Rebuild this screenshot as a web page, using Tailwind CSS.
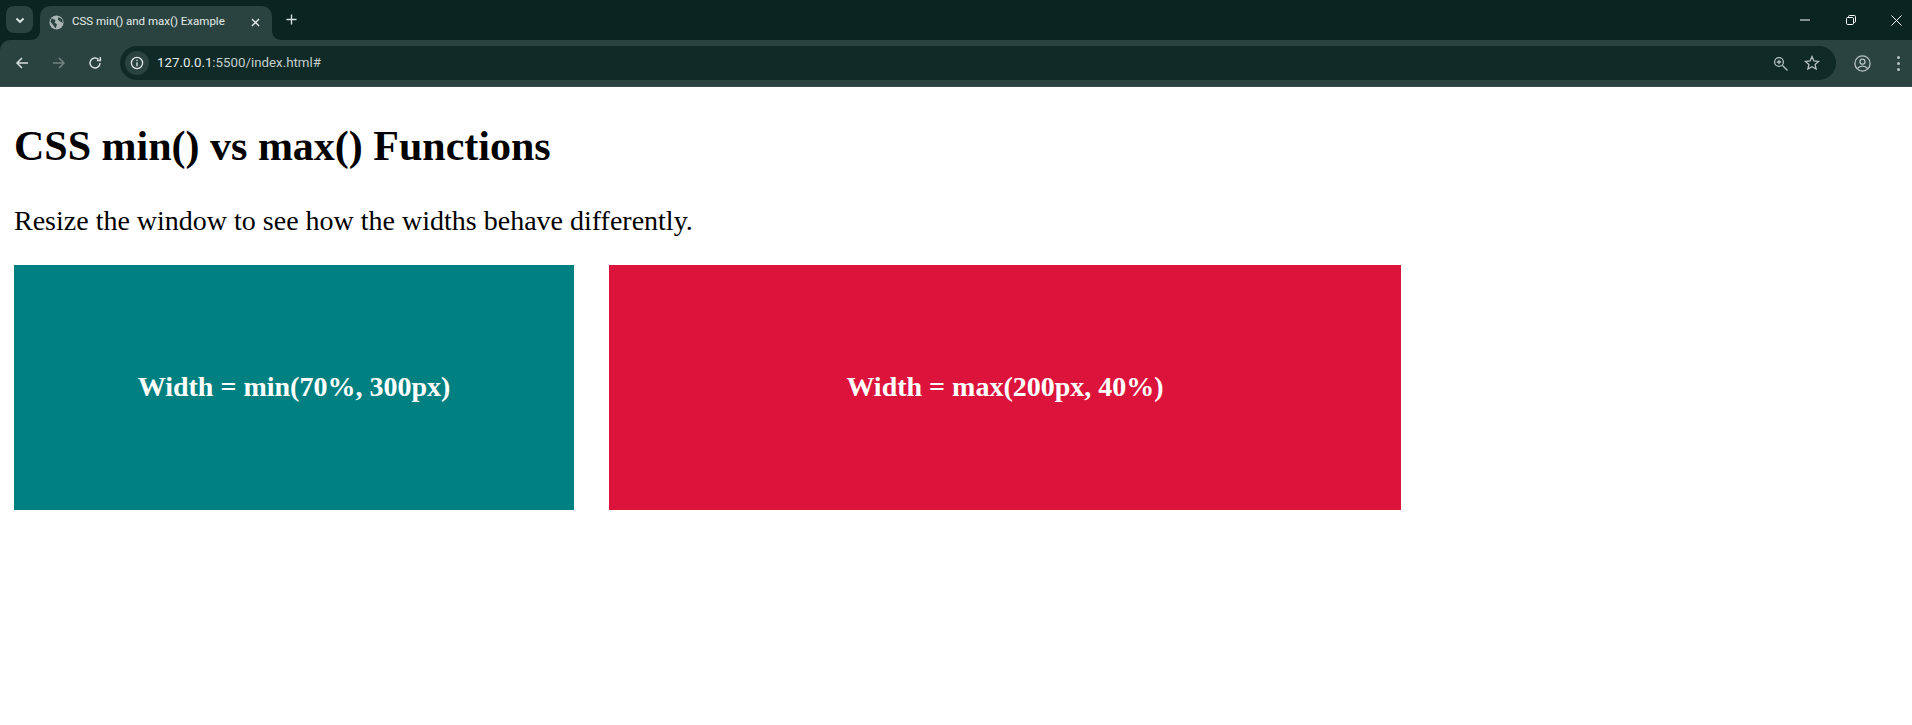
<!DOCTYPE html>
<html lang="en">
<head>
    <meta charset="UTF-8">
    <title>CSS min() and max() Example</title>
    <script src="https://cdn.jsdelivr.net/npm/@tailwindcss/browser@4"></script>
</head>
<body class="bg-white overflow-hidden h-[725px]">
    <!-- Browser chrome -->
    <div class="bg-[#0a2422] font-['Roboto',sans-serif]">
        <div class="h-[40px] flex items-start">
            <div class="ml-[6px] mt-[6px] w-[27px] h-[27px] rounded-lg bg-[#2a4340] flex items-center justify-center">
                <svg class="w-3 h-3" viewBox="0 0 12 12" fill="none" stroke="#e4ecea" stroke-width="1.8"><path d="M2.500 4.500 6 8l3.500-3.500"/></svg>
            </div>
            <div class="relative ml-[7px] mt-[6px] w-[232px] h-[34px] rounded-t-[10px] bg-[#2a4340] flex items-center pl-[9px] pr-[12px] text-[11.500px] text-[#e4ecea]">
                <svg class="absolute -left-[10px] bottom-0 w-[10px] h-[10px]" viewBox="0 0 10 10"><path d="M10 0C10 6 7 10 0 10H10Z" fill="#2a4340"/></svg>
                <svg class="absolute -right-[10px] bottom-0 w-[10px] h-[10px]" viewBox="0 0 10 10"><path d="M0 0C0 6 3 10 10 10H0Z" fill="#2a4340"/></svg>
                <svg class="w-[15px] h-[15px] shrink-0 mb-[2px]" viewBox="0 0 16 16"><circle cx="8" cy="8" r="7.500" fill="#aab6b4"/><path d="M3 3.500 7 5.500 6 8 8.500 10 7 14.500 4 10 1.500 7ZM10 2l4 2.500.8 4L12 7 9.500 5Z" fill="#2a4340"/></svg>
                <span class="ml-[8px] whitespace-nowrap mb-[2px]">CSS min() and max() Example</span>
                <svg class="w-[9px] h-[9px] ml-auto shrink-0 mb-[2px]" viewBox="0 0 10 10" stroke="#e4ecea" stroke-width="1.500"><path d="M1 1l8 8M9 1 1 9"/></svg>
            </div>
            <svg class="w-[11px] h-[11px] ml-[14px] mt-[14px]" viewBox="0 0 12 12" stroke="#d5dedc" stroke-width="1.500"><path d="M6 .5v11M.5 6h11"/></svg>
            <div class="ml-auto flex items-center h-[40px] pr-[10px]">
                <svg class="w-[10px] h-[10px] mr-[36px]" viewBox="0 0 10 10" stroke="#fff" stroke-width="1"><path d="M0 5h10"/></svg>
                <svg class="w-[10px] h-[10px] mr-[35px]" viewBox="0 0 10 10" fill="none" stroke="#fff" stroke-width="1"><rect x=".5" y="2.500" width="7" height="7" rx="1.200"/><path d="M2.500 2.500V1.700A1.200 1.200 0 0 1 3.700.5h4.600a1.200 1.200 0 0 1 1.200 1.200v4.600a1.200 1.200 0 0 1-1.200 1.200h-.8"/></svg>
                <svg class="w-[11px] h-[11px]" viewBox="0 0 11 11" stroke="#fff" stroke-width="1"><path d="M.5.5l10 10M10.500.5l-10 10"/></svg>
            </div>
        </div>
        <div class="bg-[#2a4340] h-[47px] flex items-center rounded-tl-[10px] border-b border-[#3a4f4c]">
            <svg class="w-[14px] h-[14px] ml-[15px]" viewBox="0 0 14 14" fill="none" stroke="#d5dedc" stroke-width="1.500"><path d="M13 7H2M7 2 2 7l5 5"/></svg>
            <svg class="w-[14px] h-[14px] ml-[23px]" viewBox="0 0 14 14" fill="none" stroke="#73837f" stroke-width="1.500"><path d="M1 7h11M7 2l5 5-5 5"/></svg>
            <svg class="w-[14px] h-[14px] ml-[22px]" viewBox="0 0 14 14" fill="none" stroke="#d5dedc" stroke-width="1.500"><path d="M12 7a5 5 0 1 1-1.600-3.700M12.300 1v3.400H8.900"/></svg>
            <div class="ml-[18px] w-[1716px] h-[34px] rounded-full bg-[#102a28] flex items-center pl-[5px] pr-[16px] text-[13.300px] text-[#e4ecea]">
                <div class="w-[24px] h-[24px] rounded-full bg-[#2a4340] flex items-center justify-center">
                    <svg class="w-[14px] h-[14px]" viewBox="0 0 14 14" fill="none" stroke="#e4ecea" stroke-width="1.300"><circle cx="7" cy="7" r="5.600"/><path d="M7 6.200v4M7 3.700v1.300"/></svg>
                </div>
                <span class="ml-[8px]">127.0.0.1<span class="text-[#c4d0cd]">:5500/index.html#</span></span>
                <svg class="w-[15px] h-[15px] ml-auto" viewBox="0 0 15 15" fill="none" stroke="#b6c3c0" stroke-width="1.300"><circle cx="6" cy="6" r="4.400"/><path d="M9.500 9.500l5 5M6 3.800v4.400M3.800 6h4.400"/></svg>
                <svg class="w-[16px] h-[16px] ml-[16px]" viewBox="0 0 16 16" fill="none" stroke="#b6c3c0" stroke-width="1.300"><path d="M8 1.600l1.900 4.300 4.700.5-3.500 3.100 1 4.600L8 11.800l-4.100 2.300 1-4.600L1.400 6.400l4.700-.5Z"/></svg>
            </div>
            <svg class="w-[17px] h-[17px] ml-[18px]" viewBox="0 0 17 17" fill="none" stroke="#b6c3c0" stroke-width="1.300"><circle cx="8.500" cy="8.500" r="7.600"/><circle cx="8.500" cy="6.700" r="2.500"/><path d="M3.500 13.500c1.500-2 3-2.400 5-2.400s3.500.4 5 2.400"/></svg>
            <div class="ml-[26px] flex flex-col gap-[3px]">
                <span class="block w-[3px] h-[3px] rounded-full bg-[#b6c3c0]"></span>
                <span class="block w-[3px] h-[3px] rounded-full bg-[#b6c3c0]"></span>
                <span class="block w-[3px] h-[3px] rounded-full bg-[#b6c3c0]"></span>
            </div>
        </div>
    </div>
    <!-- Page -->
    <main class="px-[14px] font-['Liberation_Serif',serif] text-black">
        <h1 class="text-[42px] font-bold mt-[36px] leading-[46px]">CSS min() vs max() Functions</h1>
        <p class="text-[28px] mt-[36px] leading-[32px]">Resize the window to see how the widths behave differently.</p>
        <div class="flex gap-[35px] mt-[28px]">
            <div class="w-[560px] h-[245px] pb-[2px] bg-[#008080] text-white text-[28px] font-bold flex items-center justify-center">Width = min(70%, 300px)</div>
            <div class="w-[792px] h-[245px] pb-[2px] bg-[#dc143c] text-white text-[28px] font-bold flex items-center justify-center">Width = max(200px, 40%)</div>
        </div>
    </main>
</body>
</html>
